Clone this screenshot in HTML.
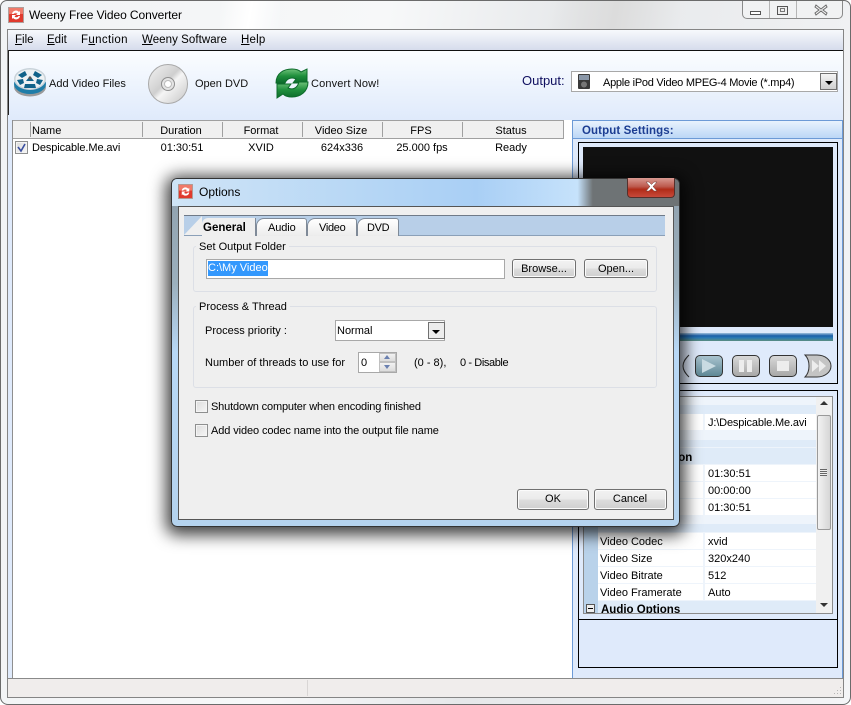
<!DOCTYPE html>
<html><head><meta charset="utf-8"><title>Weeny Free Video Converter</title>
<style>
html,body{margin:0;padding:0;background:#fff}
#r{position:relative;width:851px;height:705px;overflow:hidden;font:11px/18px "Liberation Sans",sans-serif;color:#000;background:#fff}
#r div,#r svg,#r span.t{position:absolute}
.t{white-space:nowrap;position:absolute}
.c{transform:translateX(-50%)}
u{text-decoration:underline}
.btn{box-sizing:border-box;border:1px solid #707070;border-radius:3px;background:linear-gradient(#f2f2f2 0,#ebebeb 48%,#dddddd 52%,#cfcfcf 100%);box-shadow:inset 0 0 0 1px #fbfbfb}
.grp{box-sizing:border-box;border:1px solid #dcdfe6;border-radius:3px}
.chk{box-sizing:border-box;width:13px;height:13px;border:1px solid #8e8f8f;background:linear-gradient(135deg,#dcdcdc,#f6f6f6);box-shadow:inset 0 0 0 1px #f4f4f4}
.tab{box-sizing:border-box;background:linear-gradient(#fff,#ececec);border:1px solid #7f8a98;border-bottom:none;border-radius:8px 3px 0 0}
.cell{background:#fff}
.cb{width:17px;height:17px;box-sizing:border-box;border:1px solid #707070;background:linear-gradient(#f4f4f4,#cfcfcf)}
</style></head><body>
<div id="r">
<!-- window frame -->
<div style="left:0;top:0;width:851px;height:705px;box-sizing:border-box;border:1px solid #6b6b6b;border-radius:7px 7px 8px 8px;background:linear-gradient(100deg,#f1f3f5 0,#f7f8f9 40%,#e6e8ea 60%,#f4f5f7 100%)"></div>
<div style="left:220px;top:1px;width:60px;height:28px;background:linear-gradient(100deg,transparent,#fff,transparent)"></div>
<div style="left:550px;top:1px;width:130px;height:28px;background:linear-gradient(100deg,transparent,#dcdcdc,transparent)"></div>
<!-- title -->
<svg style="left:8px;top:7px" width="16" height="16" viewBox="0 0 16 16"><rect x=".5" y=".5" width="15" height="15" fill="#e03a2e" stroke="#b0a09c"/><rect x="1" y="1" width="14" height="6" fill="#f07a6a"/><path d="M4 7a4 4 0 0 1 7-2l1-1v4H8l1.500-1.500a2.500 2.500 0 0 0-4 .5zM12 9a4 4 0 0 1-7 2l-1 1V8h4L6.500 9.500a2.500 2.500 0 0 0 4-.5z" fill="#fff"/></svg>
<span class="t" style="left:29px;top:6px;font-size:12px;letter-spacing:-.08px">Weeny Free Video Converter</span>
<!-- caption buttons -->
<div style="left:742px;top:1px;width:101px;height:18px;box-sizing:border-box;border:1px solid #8a8a8a;border-top:none;border-radius:0 0 5px 5px;background:#f1f2f3"></div>
<div style="left:769px;top:1px;width:1px;height:17px;background:#b5b5b5"></div>
<div style="left:796px;top:1px;width:1px;height:17px;background:#b5b5b5"></div>
<div style="left:750px;top:11px;width:11px;height:4px;box-sizing:border-box;border:1px solid #555;background:#fff"></div>
<div style="left:777px;top:6px;width:11px;height:9px;box-sizing:border-box;border:1px solid #555;background:#eee"></div>
<div style="left:780px;top:8px;width:5px;height:4px;box-sizing:border-box;border:1px solid #777;"></div>
<svg style="left:814px;top:4px" width="14" height="12" viewBox="0 0 14 12"><path d="M2 1l5 4 5-4 1 2-4 3 4 3-1 2-5-4-5 4-1-2 4-3-4-3z" fill="#f2f2f2" stroke="#6d6d6d"/></svg>
<!-- client -->
<div style="left:7px;top:29px;width:837px;height:669px;box-sizing:border-box;border:1px solid #858585;background:#fff"></div>
<div style="left:8px;top:30px;width:835px;height:20px;background:linear-gradient(#f7f9fc,#d6dcec)"></div>
<div style="left:8px;top:50px;width:835px;height:1px;background:#111"></div>
<span class="t" style="left:15px;top:31px;font-size:11.500px"><u>F</u>ile</span>
<span class="t" style="left:47px;top:31px;font-size:11.500px"><u>E</u>dit</span>
<span class="t" style="left:81px;top:31px;font-size:11.500px;letter-spacing:.35px">F<u>u</u>nction</span>
<span class="t" style="left:142px;top:31px;font-size:11.500px;letter-spacing:.06px"><u>W</u>eeny Software</span>
<span class="t" style="left:241px;top:31px;font-size:11.500px;letter-spacing:.2px"><u>H</u>elp</span>
<!-- toolbar -->
<div style="left:8px;top:51px;width:835px;height:69px;background:linear-gradient(#fbfdff,#dfeafb)"></div>
<div style="left:8px;top:50px;width:1px;height:65px;background:#222"></div>
<svg style="left:13px;top:67px" width="34" height="30" viewBox="0 0 34 30">
<ellipse cx="17" cy="20" rx="16" ry="9.500" fill="#9a9a9a"/>
<ellipse cx="17" cy="17" rx="16" ry="10" fill="#1f7da8"/>
<ellipse cx="17" cy="12" rx="16" ry="11" fill="#c9d3da"/>
<ellipse cx="17" cy="12" rx="14.500" ry="9.500" fill="#eef2f4"/>
<path d="M5 8l7-4 2 4-5 3zM22 4l7 4-4 3-5-3zM13 14l4-5 4 5zM4 13l6-1 1 4-4 2zM30 13l-6-1-1 4 4 2zM12 17h10l1 4H11z" fill="#11638a"/>
<circle cx="17" cy="11" r="1.500" fill="#555"/>
</svg>
<span class="t" style="left:49px;top:75px;color:#111">Add Video Files</span>
<svg style="left:147px;top:63px" width="42" height="42" viewBox="0 0 42 42">
<defs><linearGradient id="d" x1="0" y1="0" x2="1" y2="1"><stop offset="0" stop-color="#f4f4f4"/><stop offset=".45" stop-color="#cfcfcf"/><stop offset=".55" stop-color="#f5f5f5"/><stop offset="1" stop-color="#c4c4c4"/></linearGradient></defs>
<circle cx="21" cy="21" r="19.500" fill="url(#d)" stroke="#a9a9a9"/>
<circle cx="21" cy="21" r="6.500" fill="#e4e4e4" stroke="#8f8f8f"/>
<circle cx="21" cy="21" r="3.500" fill="#fff" stroke="#bbb"/>
</svg>
<span class="t" style="left:195px;top:75px;color:#111">Open DVD</span>
<svg style="left:275px;top:67px" width="34" height="33" viewBox="0 0 34 33">
<defs><linearGradient id="g" x1="0" y1="0" x2="0" y2="1"><stop offset="0" stop-color="#6fc27a"/><stop offset=".5" stop-color="#1f8f3c"/><stop offset="1" stop-color="#0c6a2b"/></linearGradient></defs>
<path d="M1 16C1 6 9 2 17 2c4 0 7 1 9 3l6-3v14H18l3-4c-4-2-9-1-11 4z" fill="url(#g)" stroke="#0d6b2b"/>
<path d="M33 15c0 10-8 15-16 15-4 0-7-1-9-3l-6 4V17h14l-3 4c4 2 9 1 11-6z" fill="url(#g)" stroke="#0d6b2b"/>
</svg>
<span class="t" style="left:311px;top:75px;color:#111;letter-spacing:.15px">Convert Now!</span>
<span class="t" style="left:522px;top:72px;font-size:13px;color:#101060">Output:</span>
<div style="left:571px;top:71px;width:267px;height:21px;box-sizing:border-box;border:1px solid #a8a8a8;background:#fff"></div>
<svg style="left:578px;top:74px" width="12" height="15" viewBox="0 0 12 15"><rect width="12" height="15" rx="1" fill="#3a3a3a"/><rect x="1" y="1" width="10" height="5" fill="#8a97a8"/><circle cx="6" cy="10.500" r="3" fill="#777"/></svg>
<span class="t" style="left:603px;top:74px;letter-spacing:-.26px">Apple iPod Video MPEG-4 Movie (*.mp4)</span>
<div class="cb" style="left:820px;top:73px"></div>
<div style="left:825px;top:81px;border:4px solid transparent;border-top:4px solid #000;border-bottom:none"></div>
<!-- left strip -->
<div style="left:8px;top:120px;width:4px;height:558px;background:#dfeafb"></div>
<div style="left:12px;top:120px;width:1px;height:558px;background:#8f8f8f"></div>
<!-- list header -->
<div style="left:13px;top:120px;width:551px;height:1px;background:#a0a0a0"></div>
<div style="left:13px;top:121px;width:551px;height:17px;background:#f0f0f0;border-bottom:1px solid #a0a0a0"></div>
<div style="left:563px;top:120px;width:1px;height:18px;background:#a0a0a0"></div>
<div style="left:30px;top:122px;width:1px;height:15px;background:#a0a0a0"></div>
<div style="left:142px;top:122px;width:1px;height:15px;background:#a0a0a0"></div>
<div style="left:222px;top:122px;width:1px;height:15px;background:#a0a0a0"></div>
<div style="left:302px;top:122px;width:1px;height:15px;background:#a0a0a0"></div>
<div style="left:382px;top:122px;width:1px;height:15px;background:#a0a0a0"></div>
<div style="left:462px;top:122px;width:1px;height:15px;background:#a0a0a0"></div>
<span class="t" style="left:32px;top:122px">Name</span>
<span class="t c" style="left:181px;top:122px">Duration</span>
<span class="t c" style="left:261px;top:122px">Format</span>
<span class="t c" style="left:341px;top:122px">Video Size</span>
<span class="t c" style="left:421px;top:122px">FPS</span>
<span class="t c" style="left:511px;top:122px">Status</span>
<div class="chk" style="left:15px;top:141px"></div>
<svg style="left:15px;top:141px" width="13" height="13" viewBox="0 0 13 13"><path d="M3 6l3 4 4-7" fill="none" stroke="#3a4fa0" stroke-width="1.600"/></svg>
<span class="t" style="left:32px;top:139px;letter-spacing:-.1px">Despicable.Me.avi</span>
<span class="t c" style="left:182px;top:139px">01:30:51</span>
<span class="t c" style="left:261px;top:139px">XVID</span>
<span class="t c" style="left:342px;top:139px">624x336</span>
<span class="t c" style="left:422px;top:139px">25.000 fps</span>
<span class="t c" style="left:511px;top:139px">Ready</span>
<!-- right panel -->
<div style="left:572px;top:120px;width:271px;height:559px;box-sizing:border-box;border:1px solid #6c9ad6;background:#dfeafb"></div>
<div style="left:573px;top:121px;width:269px;height:17px;background:linear-gradient(#e8f2fd,#bcd7f6);border-bottom:1px solid #6c9ad6"></div>
<span class="t" style="left:582px;top:122px;font-weight:bold;color:#1c3d92;font-size:11.500px;letter-spacing:.1px">Output Settings:</span>
<div style="left:578px;top:142px;width:260px;height:242px;box-sizing:border-box;border:1px solid #000;background:#dfeafb"></div>
<div style="left:583px;top:147px;width:250px;height:180px;background:#111"></div>
<div style="left:583px;top:333px;width:250px;height:8px;background:linear-gradient(#9fc0dc,#1b5fa8 35%,#2a7ab5 60%,#5b8d80)"></div>
<!-- controls -->
<div style="left:695px;top:355px;width:28px;height:22px;box-sizing:border-box;border:1px solid #333;border-radius:5px;background:linear-gradient(#a9c3cf,#5f8896)"></div>
<svg style="left:699px;top:358px" width="20" height="16" viewBox="0 0 20 16"><path d="M3 1l14 7-14 7z" fill="#c9dbe2"/></svg>
<div style="left:732px;top:355px;width:28px;height:22px;box-sizing:border-box;border:1px solid #333;border-radius:5px;background:linear-gradient(#d8d8d8,#a8a8a8)"></div>
<div style="left:739px;top:360px;width:5px;height:12px;background:#ededed"></div>
<div style="left:747px;top:360px;width:5px;height:12px;background:#ededed"></div>
<div style="left:769px;top:355px;width:28px;height:22px;box-sizing:border-box;border:1px solid #333;border-radius:5px;background:linear-gradient(#d8d8d8,#a8a8a8)"></div>
<div style="left:777px;top:361px;width:12px;height:10px;background:#ededed"></div>
<svg style="left:803px;top:354px" width="30" height="24" viewBox="0 0 30 24"><path d="M2 1h12c8 0 14 5 14 11s-6 11-14 11H2c3-3 4-7 4-11S5 4 2 1z" fill="#c4c4c4" stroke="#333"/><path d="M9 6l7 6-7 6zM16 6l7 6-7 6z" fill="#ededed"/></svg>
<svg style="left:680px;top:354px" width="10" height="24" viewBox="0 0 10 24"><path d="M9 1C5 5 3 8 3 12s2 7 6 11" fill="none" stroke="#333"/></svg>
<!-- property box -->
<div style="left:578px;top:390px;width:260px;height:278px;box-sizing:border-box;border:1px solid #000;background:#dfeafb"></div>
<div style="left:578px;top:619px;width:260px;height:1px;background:#000"></div>
<div style="left:583px;top:396px;width:250px;height:218px;box-sizing:border-box;border:1px solid #8b8b8b;background:#fff"></div>
<div style="left:584px;top:397px;width:14px;height:216px;background:#b9d2ea"></div>
<div style="left:598px;top:397px;width:218px;height:216px;background:#eef4fb"></div>
<div style="left:598px;top:405px;width:218px;height:9px;background:#dfebf8"></div>
<div class="cell" style="left:598px;top:414px;width:105px;height:16px"></div><div class="cell" style="left:705px;top:414px;width:111px;height:16px"></div>
<div style="left:598px;top:448px;width:218px;height:16px;background:#dfebf8"></div>
<div style="left:598px;top:440px;width:218px;height:7px;background:#dfebf8"></div>
<span class="t" style="left:645px;top:449px;font-weight:bold;font-size:11.500px">Duration</span>
<div class="cell" style="left:598px;top:465px;width:105px;height:16px"></div><div class="cell" style="left:705px;top:465px;width:111px;height:16px"></div>
<div class="cell" style="left:598px;top:482px;width:105px;height:16px"></div><div class="cell" style="left:705px;top:482px;width:111px;height:16px"></div>
<div class="cell" style="left:598px;top:499px;width:105px;height:16px"></div><div class="cell" style="left:705px;top:499px;width:111px;height:16px"></div>
<div style="left:598px;top:524px;width:218px;height:8px;background:#dfebf8"></div>
<div class="cell" style="left:598px;top:533px;width:105px;height:16px"></div><div class="cell" style="left:705px;top:533px;width:111px;height:16px"></div>
<div class="cell" style="left:598px;top:550px;width:105px;height:16px"></div><div class="cell" style="left:705px;top:550px;width:111px;height:16px"></div>
<div class="cell" style="left:598px;top:567px;width:105px;height:16px"></div><div class="cell" style="left:705px;top:567px;width:111px;height:16px"></div>
<div class="cell" style="left:598px;top:584px;width:105px;height:16px"></div><div class="cell" style="left:705px;top:584px;width:111px;height:16px"></div>
<div style="left:598px;top:601px;width:218px;height:12px;background:#dfebf8"></div>
<span class="t" style="left:708px;top:414px;letter-spacing:-.15px">J:\Despicable.Me.avi</span>
<span class="t" style="left:708px;top:465px">01:30:51</span>
<span class="t" style="left:708px;top:482px">00:00:00</span>
<span class="t" style="left:708px;top:499px">01:30:51</span>
<span class="t" style="left:600px;top:533px">Video Codec</span><span class="t" style="left:708px;top:533px">xvid</span>
<span class="t" style="left:600px;top:550px">Video Size</span><span class="t" style="left:708px;top:550px">320x240</span>
<span class="t" style="left:600px;top:567px">Video Bitrate</span><span class="t" style="left:708px;top:567px">512</span>
<span class="t" style="left:600px;top:584px">Video Framerate</span><span class="t" style="left:708px;top:584px">Auto</span>
<div style="left:598px;top:601px;width:218px;height:12px;overflow:hidden"><span class="t" style="left:3px;top:0;line-height:18px;font-weight:bold;font-size:11.500px">Audio Options</span></div>
<div style="left:586px;top:604px;width:9px;height:9px;box-sizing:border-box;border:1px solid #555;background:#eee"></div>
<div style="left:588px;top:608px;width:5px;height:1px;background:#000"></div>
<!-- scrollbar -->
<div style="left:816px;top:397px;width:16px;height:216px;background:#f0f0f0"></div>
<div style="left:817px;top:415px;width:14px;height:115px;box-sizing:border-box;border:1px solid #9a9a9a;border-radius:2px;background:linear-gradient(90deg,#f2f2f2,#d6d6d6)"></div>
<div style="left:820px;top:401px;border:4px solid transparent;border-bottom:4px solid #333;border-top:none"></div>
<div style="left:820px;top:603px;border:4px solid transparent;border-top:4px solid #333;border-bottom:none"></div>
<div style="left:820px;top:469px;width:7px;height:7px;background:repeating-linear-gradient(#666 0 1px,#eee 1px 2px)"></div>
<!-- status -->
<div style="left:8px;top:678px;width:835px;height:1px;background:#8a8a8a"></div>
<div style="left:8px;top:679px;width:835px;height:18px;background:#f0edec"></div>
<div style="left:307px;top:680px;width:1px;height:16px;background:#d9d6d5"></div>
<svg style="left:832px;top:686px" width="10" height="10" viewBox="0 0 10 10"><path d="M8 1h1v1H8zM5 4h1v1H5zM8 4h1v1H8zM2 7h1v1H2zM5 7h1v1H5zM8 7h1v1H8z" fill="#b5b5b5"/></svg>
<!-- DIALOG -->
<div style="left:171px;top:178px;width:509px;height:349px;border-radius:6px;box-shadow:0 3px 16px 5px rgba(0,0,0,.75)"></div>
<div style="left:171px;top:178px;width:509px;height:349px;box-sizing:border-box;border:1px solid #333;border-radius:6px;background:linear-gradient(#8fa0ad 0,#9cb0bd 30%,#b8d8f6 50%,#b5d3ee 100%)"></div>
<div style="left:172px;top:179px;width:507px;height:27px;border-radius:5px 5px 0 0;background:linear-gradient(90deg,#cfe4f6 0,#b5d6f5 40%,#a9cff5 60%,#c6e2fb 80%,#6e7375 83%,#6e7375 100%)"></div>
<svg style="left:178px;top:184px" width="15" height="15" viewBox="0 0 16 16"><rect x=".5" y=".5" width="15" height="15" fill="#e03a2e" stroke="#b0a09c"/><rect x="1" y="1" width="14" height="6" fill="#f07a6a"/><path d="M4 7a4 4 0 0 1 7-2l1-1v4H8l1.500-1.500a2.500 2.500 0 0 0-4 .5zM12 9a4 4 0 0 1-7 2l-1 1V8h4L6.500 9.500a2.500 2.500 0 0 0 4-.5z" fill="#fff"/></svg>
<span class="t" style="left:199px;top:183px;font-size:12px">Options</span>
<div style="left:627px;top:178px;width:48px;height:20px;box-sizing:border-box;border:1px solid #55302c;border-top:none;border-radius:0 0 4px 4px;background:linear-gradient(#d99a92 0,#bd5a4e 45%,#b02c18 60%,#c8493a 100%)"></div>
<svg style="left:645px;top:181px" width="13" height="11" viewBox="0 0 13 11"><path d="M1 1h3l2.500 2.500L9 1h3L8 5.500l4 4.500H9L6.500 7.500 4 10H1l4-4.500z" fill="#fff" stroke="#6b3a34" stroke-width=".5"/></svg>
<div style="left:178px;top:206px;width:496px;height:314px;box-sizing:border-box;border:1px solid #555;background:#efefef"></div>
<!-- tabs -->
<div style="left:184px;top:215px;width:481px;height:21px;box-sizing:border-box;background:#b8cfe8;border-top:1px solid #6f7a88;border-bottom:1px solid #8ba0b8"></div>
<div style="left:184px;top:216px;width:0;height:0;border-bottom:19px solid #efefef;border-left:18px solid transparent"></div>
<div style="left:202px;top:218px;width:54px;height:18px;background:#efefef;border-right:1px solid #7f8a98;box-sizing:border-box;border-radius:6px 0 0 0"></div>
<div class="tab" style="left:256px;top:218px;width:51px;height:18px"></div>
<div class="tab" style="left:307px;top:218px;width:50px;height:18px"></div>
<div class="tab" style="left:357px;top:218px;width:42px;height:18px"></div>
<span class="t" style="left:203px;top:219px;font-weight:bold;font-size:11.500px">General</span>
<span class="t" style="left:268px;top:219px;letter-spacing:-.1px">Audio</span>
<span class="t" style="left:319px;top:219px;letter-spacing:-.3px">Video</span>
<span class="t" style="left:367px;top:219px;letter-spacing:-.3px">DVD</span>
<!-- groups -->
<div class="grp" style="left:193px;top:246px;width:464px;height:46px"></div>
<span class="t" style="left:196px;top:238px;height:16px;line-height:18px;background:#efefef;padding:0 3px">Set Output Folder</span>
<div style="left:206px;top:259px;width:299px;height:20px;box-sizing:border-box;border:1px solid #a8a8a8;background:#fff"></div>
<span class="t" style="left:208px;top:261px;width:60px;height:15px;line-height:15px;background:#3398fd;color:#fff">C:\My Video</span>
<div class="btn" style="left:512px;top:259px;width:64px;height:19px"></div>
<span class="t c" style="left:544px;top:260px">Browse...</span>
<div class="btn" style="left:584px;top:259px;width:64px;height:19px"></div>
<span class="t c" style="left:616px;top:260px">Open...</span>
<div class="grp" style="left:193px;top:306px;width:464px;height:82px"></div>
<span class="t" style="left:196px;top:298px;height:16px;line-height:18px;background:#efefef;padding:0 3px">Process &amp; Thread</span>
<span class="t" style="left:205px;top:322px">Process priority :</span>
<div style="left:335px;top:320px;width:110px;height:21px;box-sizing:border-box;border:1px solid #a8a8a8;background:#fff"></div>
<span class="t" style="left:337px;top:322px">Normal</span>
<div class="cb" style="left:428px;top:322px;background:#ececec"></div>
<div style="left:432px;top:330px;border:4px solid transparent;border-top:4px solid #000;border-bottom:none"></div>
<span class="t" style="left:205px;top:354px">Number of threads to use for</span>
<div style="left:358px;top:352px;width:39px;height:21px;box-sizing:border-box;border:1px solid #a8a8a8;background:#fff"></div>
<span class="t" style="left:361px;top:354px">0</span>
<div style="left:379px;top:353px;width:17px;height:9px;background:linear-gradient(#f2f2f2,#dcdcdc);border:1px solid #c0c0c0;box-sizing:border-box"></div>
<div style="left:379px;top:362px;width:17px;height:10px;background:linear-gradient(#f2f2f2,#dcdcdc);border:1px solid #c0c0c0;box-sizing:border-box"></div>
<div style="left:384px;top:355px;border:3.500px solid transparent;border-bottom:4px solid #6a80b0;border-top:none"></div>
<div style="left:384px;top:365px;border:3.500px solid transparent;border-top:4px solid #6a80b0;border-bottom:none"></div>
<span class="t" style="left:414px;top:354px">(0 - 8),</span>
<span class="t" style="left:460px;top:354px;letter-spacing:-.4px">0 - Disable</span>
<div class="chk" style="left:195px;top:400px"></div>
<span class="t" style="left:211px;top:398px;letter-spacing:-.15px">Shutdown computer when encoding finished</span>
<div class="chk" style="left:195px;top:424px"></div>
<span class="t" style="left:211px;top:422px;letter-spacing:-.1px">Add video codec name into the output file name</span>
<div class="btn" style="left:517px;top:489px;width:72px;height:21px"></div>
<span class="t c" style="left:553px;top:490px">OK</span>
<div class="btn" style="left:594px;top:489px;width:73px;height:21px"></div>
<span class="t c" style="left:630px;top:490px">Cancel</span>
</div>
</body></html>
